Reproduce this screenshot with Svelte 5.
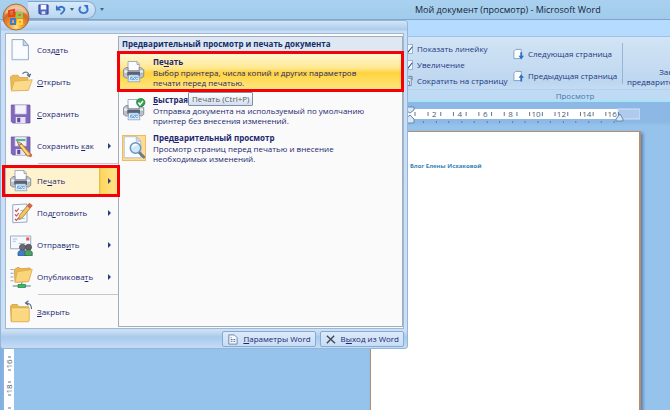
<script lang="ts">
	type Item = { icon: string; before: string; key: string; after: string; arrow?: boolean; line?: boolean };

	const items: Item[] = [
		{ icon: 'new', before: 'Созд', key: 'а', after: 'ть' },
		{ icon: 'open', before: '', key: 'О', after: 'ткрыть' },
		{ icon: 'save', before: '', key: 'С', after: 'охранить' },
		{ icon: 'saveas', before: 'Сохранить ', key: 'к', after: 'ак', arrow: true, line: true },
		{ icon: 'print', before: 'Пе', key: 'ч', after: 'ать', arrow: true },
		{ icon: 'prepare', before: 'Под', key: 'г', after: 'отовить', arrow: true },
		{ icon: 'send', before: 'Отправ', key: 'и', after: 'ть', arrow: true },
		{ icon: 'publish', before: 'Опубликова', key: 'т', after: 'ь', arrow: true, line: true },
		{ icon: 'close', before: '', key: 'З', after: 'акрыть' }
	];

	const actions = [
		{
			icon: 'print',
			before: 'Пе',
			key: 'ч',
			after: 'ать',
			lines: ['Выбор принтера, числа копий и других параметров', 'печати перед печатью.']
		},
		{
			icon: 'quick',
			before: '',
			key: 'Б',
			after: 'ыстрая',
			lines: ['Отправка документа на используемый по умолчанию', 'принтер без внесения изменений.']
		},
		{
			icon: 'preview',
			before: 'Пред',
			key: 'в',
			after: 'арительный просмотр',
			lines: ['Просмотр страниц перед печатью и внесение', 'необходимых изменений.']
		}
	];

	const marks = [2, 4, 6, 8, 10, 12, 14, 16];
	const step = 12.7;

	let active = $state('print');
	let showRuler = $state(true);
	let zoomOn = $state(true);
</script>

{#snippet folder()}
	<path d="M2 8l2-2h7l2 3h13v19H3z" fill="#e9b949" stroke="#c99a3c" />
	<path d="M3 11h24v16l-1 2H3z" fill="#fbd77f" stroke="#d5a447" />
	<path d="M4 12h22" stroke="#fff0bd" />
{/snippet}

{#snippet floppy()}
	<path d="M3 4h25v24H5l-2-2z" fill="#8069bd" stroke="#6650a3" />
	<path d="M8 4h15v12H8z" fill="#f4f2fb" stroke="#c3bae0" />
	<path d="M9 20h13v8H9z" fill="#e6e2f3" />
	<path d="M11 21h4v6h-4z" fill="#5d4a96" />
{/snippet}

{#snippet printer()}
	<path d="M8 2h12l3 3v9H8z" fill="#fafcff" stroke="#8796ad" />
	<path d="M20 2v4h3" fill="#d5deea" stroke="#8796ad" />
	<path d="M2 13l3-3h3v5h15v-5h2l4 3v9l-3 2H5l-3-2z" fill="#bcc0cb" stroke="#777e90" />
	<path d="M3 14h4v2h17v-2h4v3H3z" fill="#eceef3" />
	<path d="M7 16h17v5H7z" fill="#5b6172" />
	<path d="M26 18h1" stroke="#62d83e" stroke-width="2" />
	<path d="M9 20h13l2 9H8z" fill="#f7fbff" stroke="#7995bd" />
	<path d="M11 22h10l1 5H10z" fill="#73aee2" />
	<path d="M12 26l3-3 3 3 2-2 1 2" fill="none" stroke="#fff" />
{/snippet}

{#snippet pencil()}
	<path d="M13 15l4-2 12 14-4 3z" fill="#f6bf42" stroke="#95642c" />
	<path d="M15 14l11 14" stroke="#ffe895" stroke-width="1.5" />
	<path d="M13 15l-2-5 6 3z" fill="#f4d7a9" stroke="#76583e" />
	<path d="M26 30l4-4 1 3-2 2z" fill="#d46555" />
{/snippet}

{#snippet icon(name: string)}
	<svg class="icon" viewBox="0 0 32 32" aria-hidden="true">
		{#if name === 'new'}
			<path d="M4 2h15l7 8v19H4z" fill="#eef6fd" stroke="#7f99b8" />
			<path d="M6 4h11v8h7v15H6z" fill="#fff" opacity=".7" />
			<path d="M19 2v8h7z" fill="#c7d9ec" stroke="#7f99b8" />
		{:else if name === 'open'}
			<path d="M2 9l3-2h7l2 3h11v17H3z" fill="#edbb55" stroke="#d3a04a" />
			<path d="M7 15l24-2-5 14-23 1z" fill="#fcda8a" stroke="#dca850" />
			<path d="M18 5c4-4 8-2 9 2m-3-1l3 3 2-4" fill="none" stroke="#55718f" stroke-width="1.5" />
		{:else if name === 'save'}
			{@render floppy()}
		{:else if name === 'saveas'}
			{@render floppy()}
			<path d="M9 8h13" stroke="#58b684" stroke-width="3" />
			{@render pencil()}
		{:else if name === 'print'}
			{@render printer()}
		{:else if name === 'quick'}
			{@render printer()}
			<circle cx="25" cy="6" r="5.5" fill="#31a44b" stroke="#177531" />
			<path d="M22 6l2 3 4-5" fill="none" stroke="#fff" stroke-width="2" />
		{:else if name === 'preview'}
			<path d="M3 1h16l6 6v22H3z" fill="#fafdff" stroke="#a0b5cb" />
			<path d="M19 1v6h6z" fill="#d4e1ef" stroke="#a0b5cb" />
			<path d="M23 22l6 6" stroke="#697b90" stroke-width="4" stroke-linecap="round" />
			<circle cx="18" cy="16" r="7" fill="#cbe9fc" stroke="#7593b5" stroke-width="2" />
			<path d="M14 15c1-3 3-4 6-3" fill="none" stroke="#fff" stroke-width="2" />
		{:else if name === 'prepare'}
			<path d="M5 5l19-1v24l-19 1z" fill="#f7faff" stroke="#7890b1" />
			<path d="M8 12l2 2 3-4m-5 8l2 2 3-4m-5 8l2 2 3-4" fill="none" stroke="#d44849" stroke-width="1.5" />
			<path d="M15 13l6-1m-6 7l6-1m-6 6l6-1" stroke="#8ca4c4" />
			<path d="M27 3l4 3-13 16-5 3 1-6z" fill="#f4c75a" stroke="#9a713c" />
			<path d="M27 3l4 3-3 4-4-3z" fill="#d95f50" />
		{:else if name === 'send'}
			<path d="M2 4h27v17H2z" fill="#f5f9ff" stroke="#7895bb" />
			<path d="M5 8h6m-6 3h4m4 3h9" stroke="#91a9c8" />
			<path d="M23 6h4v4h-4z" fill="#e05743" />
			<circle cx="18" cy="19" r="4" fill="#6f6a70" stroke="#4b4a55" />
			<path d="M12 30v-4c1-4 11-4 12 0v4z" fill="#407cc7" stroke="#285492" />
			<circle cx="26" cy="19" r="4" fill="#64606a" stroke="#45444f" />
			<path d="M21 30v-4c1-4 9-4 10 0v4z" fill="#4aa35f" stroke="#2a6c40" />
		{:else if name === 'publish'}
			<path d="M2 6h4M2 11h4M2 16h4M2 21h4" stroke="#8fa5c4" stroke-width="1.5" />
			<path d="M7 6l5-3 4 2 12-1 2 3-4 15-18 1z" fill="#edb64c" stroke="#cf9c45" />
			<path d="M11 9l20-3-5 16-18 1z" fill="#fbd57a" stroke="#e0ab50" />
			<path d="M17 23v4M5 28h24" stroke="#8aa5ad" stroke-width="2" />
			<path d="M12 26h10v4H12z" fill="#35bb62" stroke="#278451" />
		{:else if name === 'close'}
			{@render folder()}
			<path d="M30 12c0-5-2-8-7-8m3-3l-4 3 4 3" fill="none" stroke="#536782" stroke-width="1.5" />
		{/if}
	</svg>
{/snippet}

{#snippet pageIcon(up: boolean)}
	<svg class="page-icon" viewBox="0 0 12 12" aria-hidden="true">
		<path d="M1 3l2-2h6v10H1z" fill="#fff" stroke="#7f9cc0" />
		<path d={up ? 'M9 4l3 4h-2v4H8V8H6z' : 'M8 4h2v4h2l-3 4-3-4h2z'} fill="#2d70c9" />
	</svg>
{/snippet}

<div class="window">
	<header class="titlebar">
		<nav class="quick">
			<button aria-label="Сохранить">
				<svg viewBox="0 0 12 12">
					<path d="M1 1h10v10H2l-1-1z" fill="#5267c4" stroke="#313f96" />
					<path d="M3 1h6v5H3z" fill="#f3f7ff" />
					<path d="M4 8h4v3H4z" fill="#dce3f5" />
				</svg>
			</button>
			<button aria-label="Отменить">
				<svg viewBox="0 0 12 12">
					<path d="M3 5c4-4 8-1 7 2-1 2-2 3-4 4" fill="none" stroke="#3972c8" stroke-width="2" />
					<path d="M1 1v6h6z" fill="#3972c8" />
				</svg>
			</button>
			<span class="caret"></span>
			<button aria-label="Повторить">
				<svg viewBox="0 0 12 12">
					<path d="M3 3C0 6 2 10 6 10s6-4 3-7" fill="none" stroke="#3972c8" stroke-width="2" />
					<path d="M6 1h5v5z" fill="#3972c8" />
				</svg>
			</button>
		</nav>
		<button class="more" aria-label="Настройка панели"><span></span></button>
		<h1>Мой документ (просмотр) - Microsoft Word</h1>
	</header>

	<div class="tabs"></div>

	<section class="ribbon">
		<div class="group">
			<div class="options">
				<label><input type="checkbox" bind:checked={showRuler} />Показать линейку</label>
				<label><input type="checkbox" bind:checked={zoomOn} />Увеличение</label>
				<button>
					<svg class="page-icon" viewBox="0 0 12 12" aria-hidden="true">
						<path d="M2 3h8v8H2z" fill="#f5f9ff" stroke="#6485ad" />
						<path d="M7 1h4v4M5 6h3v5" fill="none" stroke="#657b98" />
					</svg>
					Сократить на страницу
				</button>
			</div>
			<div class="paging">
				<button>{@render pageIcon(false)}Следующая страница</button>
				<button>{@render pageIcon(true)}Предыдущая страница</button>
			</div>
			<button class="leave">Закрыть окно<br />предварительного просмотра</button>
		</div>
		<div class="caption">Просмотр</div>
	</section>

	<main class="desk">
		<div class="ruler">
			<svg width="270" height="24" aria-hidden="true">
				<rect x="38" y="7" width="210" height="10" fill="#fff" />
				<rect x="248" y="7" width="22" height="10" fill="#aecbed" stroke="#d0e3f8" />
				{#each marks as n}
					<text x={39 + n * step} y="15">{n}</text>
					<path d="M{39 + (n - 0.5) * step} 10v4M{39 + (n + 0.5) * step} 10v4" stroke="#66758b" />
				{/each}
				<path d="M45 10v4" stroke="#66758b" />
				{#each marks as n}
					<path d="M{28 + n * step} 19v2M{41 + n * step} 19v2" stroke="#587fae" />
				{/each}
				<path d="M35 5h9v3l-4 3-5-3zm0 12l5-4 4 4v4h-9z" fill="#d8e7f6" stroke="#6587af" />
				<path d="M246 17l4-5 3 5v2h-7z" fill="#d8e7f6" stroke="#6587af" />
			</svg>
		</div>
		<div class="workspace">
			<div class="side">
				<svg width="10" height="61" aria-hidden="true">
					<g transform="rotate(-90)">
						<text x="-15" y="8">16</text>
						<text x="-40" y="8">18</text>
					</g>
					<path d="M4 8h3M4 21h3M4 33h3M4 46h3M4 59h3" stroke="#66758b" />
				</svg>
			</div>
			<article class="paper"><p>Блог Елены Исхаковой</p></article>
		</div>
	</main>

	<div class="menu">
		<div class="body">
			<ul class="left">
				{#each items as item}
					<li class:line={item.line}>
						<button class="entry" class:active={active === item.icon} onclick={() => (active = item.icon)}>
							{@render icon(item.icon)}
							<span class="label">{item.before}<u>{item.key}</u>{item.after}</span>
							{#if item.arrow}<span class="arrow"></span>{/if}
						</button>
					</li>
				{/each}
			</ul>
			<section class="right">
				<h2>Предварительный просмотр и печать документа</h2>
				{#each actions as a, i}
					<button class="action" class:hot={i === 0}>
						<span class="pic" class:framed={i === 2}>{@render icon(a.icon)}</span>
						<span class="text">
							<strong>{a.before}<u>{a.key}</u>{a.after}</strong>
							{#each a.lines as line}
								<span>{line}</span>
							{/each}
						</span>
						{#if i === 0}<span class="tooltip" role="tooltip">Печать (Ctrl+P)</span>{/if}
					</button>
				{/each}
			</section>
		</div>
		<footer>
			<button>
				<svg viewBox="0 0 12 12" aria-hidden="true">
					<path d="M2 1h6l3 3v7H2z" fill="#f7faff" stroke="#69809f" />
					<path d="M4 4h1m-1 2h2m-2 2h2m1-2h2m-2 2h2" stroke="#496c9b" />
				</svg>
				<span><u>П</u>араметры Word</span>
			</button>
			<button>
				<svg viewBox="0 0 12 12" aria-hidden="true">
					<path d="M2 2l9 8M10 2L2 10" stroke="#3d4657" stroke-width="1.5" />
				</svg>
				<span>В<u>ы</u>ход из Word</span>
			</button>
		</footer>
	</div>

	<button class="orb" aria-label="Office">
		<svg viewBox="0 0 28 28" aria-hidden="true">
			<defs>
				<radialGradient id="orb" cx="50%" cy="88%" r="85%">
					<stop offset="0" stop-color="#ffe680" />
					<stop offset=".3" stop-color="#f79a2c" />
					<stop offset=".65" stop-color="#cf6a28" />
					<stop offset="1" stop-color="#efc79c" />
				</radialGradient>
			</defs>
			<circle cx="14" cy="14" r="13" fill="url(#orb)" stroke="#a56b42" />
			<path d="M3 11C5 1 23 1 25 11c-6-3-15-3-22 0z" fill="#fff" opacity=".4" />
			<g fill="none" stroke-width="2">
				<path d="M7 8l5-1v6H7z" stroke="#e6451c" />
				<path d="M15 10h5v4h-5z" stroke="#8fc957" />
				<path d="M9 16h4v5H9z" stroke="#3a7dd0" />
				<path d="M16 17h4v4h-4z" stroke="#ffd84a" />
			</g>
		</svg>
	</button>
</div>

<style>
	:global(body) {
		margin: 0;
	}
	.window {
		position: relative;
		display: flex;
		flex-direction: column;
		min-height: 100vh;
		overflow: hidden;
		background: #95c3ec;
		font: 8px/12px 'Open Sans', 'Noto Sans', sans-serif;
		color: #1d397f;
	}
	button {
		display: flex;
		align-items: center;
		margin: 0;
		padding: 0;
		border: 0;
		background: none;
		font: inherit;
		color: inherit;
		text-align: left;
		white-space: nowrap;
	}
	u {
		text-underline-offset: 1px;
	}
	svg {
		display: block;
		flex: none;
	}
	.titlebar {
		display: flex;
		align-items: center;
		height: 20px;
		background: linear-gradient(#a9d1ef, #a1cbeb);
		border-bottom: 1px solid #80a5c8;
		box-sizing: border-box;
	}
	.quick {
		display: flex;
		align-items: center;
		gap: 6px;
		height: 18px;
		margin-left: 28px;
		padding: 0 6px 0 10px;
		border: 1px solid #86a6c6;
		border-left: 0;
		border-radius: 0 9px 9px 0;
		background: linear-gradient(#d7eafb, #b9d6f0);
		box-sizing: border-box;
	}
	.quick svg {
		width: 11px;
		height: 11px;
	}
	.caret,
	.more span {
		border: 2px solid transparent;
		border-top: 3px solid #416291;
		border-bottom: 0;
	}
	.caret {
		margin: 0 -2px;
	}
	.more {
		width: 12px;
		justify-content: center;
	}
	h1 {
		flex: 1;
		margin: 0;
		padding-left: 307px;
		font-size: 9px;
		font-weight: 400;
		color: #17243a;
		white-space: nowrap;
	}
	.tabs {
		height: 16px;
		background: #b5dbff;
	}
	.ribbon {
		height: 66px;
		border-top: 1px solid #9fc1e4;
		border-bottom: 2px solid #a6e4f3;
		background: linear-gradient(#d2e4f5, #bed7f0 70%, #c9e0f6);
		box-sizing: border-box;
		overflow: hidden;
	}
	.group {
		display: flex;
		height: 52px;
		padding-left: 402px;
	}
	.options {
		display: flex;
		flex-direction: column;
		gap: 4px;
		width: 111px;
		padding-top: 6px;
		box-sizing: border-box;
		flex: none;
		white-space: nowrap;
	}
	.options label,
	.options button {
		display: flex;
		align-items: center;
		gap: 4px;
		height: 12px;
	}
	.options input {
		appearance: none;
		width: 11px;
		height: 10px;
		margin: 0;
		border: 1px solid #9bb7d6;
		background: #f5f9ff;
		flex: none;
	}
	.options input:checked::after {
		content: '';
		display: block;
		width: 3px;
		height: 6px;
		margin-left: 4px;
		border: solid #2a4a86;
		border-width: 0 1px 1px 0;
		transform: rotate(40deg);
	}
	.page-icon {
		width: 11px;
		height: 12px;
	}
	.paging {
		display: flex;
		flex-direction: column;
		gap: 10px;
		width: 110px;
		margin: 6px 0 5px;
		padding-top: 5px;
		border-right: 1px solid #98b5d6;
		box-sizing: border-box;
		flex: none;
	}
	.paging button {
		gap: 4px;
		height: 12px;
	}
	.leave {
		display: block;
		padding: 28px 0 0 4px;
		line-height: 10px;
		text-align: center;
	}
	.caption {
		padding-left: 480px;
		border-top: 1px solid #b4d0ec;
		background: #bfdaf4;
		text-align: center;
		color: #4678ad;
	}
	.desk {
		display: flex;
		flex-direction: column;
		flex: 1;
	}
	.ruler {
		height: 29px;
		padding-left: 370px;
		background: linear-gradient(#8db8e6 20px, #95c3ec 24px);
		box-sizing: border-box;
	}
	.desk text {
		font-size: 8px;
		text-anchor: middle;
		fill: #4d5c74;
	}
	.workspace {
		display: flex;
		justify-content: space-between;
		flex: 1;
	}
	.side {
		width: 14px;
		padding: 218px 0 0 4px;
		background: linear-gradient(90deg, #83afe0, #95c3ec);
		box-sizing: border-box;
	}
	.side svg {
		background: #fff;
	}
	.paper {
		flex: 1;
		margin: 0 29px 0 356px;
		border: 1px solid #b78d6c;
		border-bottom: 0;
		border-right-width: 2px;
		background: #fff;
		box-shadow: 2px 2px 3px #527fae;
	}
	.paper p {
		margin: 0;
		padding: 28px 0 0 39px;
		font-size: 6px;
		font-weight: 700;
		color: #3584b5;
	}
	.menu {
		position: absolute;
		top: 20px;
		left: 0;
		width: 408px;
		padding: 12px 3px 0 4px;
		border: 1px solid #93b6d9;
		border-radius: 3px;
		background: linear-gradient(#d4e5f7, #a9ccec 9px, #c9def4 10px, #cbdff5 310px, #a8caec 316px, #c5dcf5);
		box-sizing: border-box;
		color: #1c2770;
	}
	.body {
		display: flex;
		height: 296px;
		border: 1px solid #a0b8d2;
		background: #fafafa;
		box-sizing: border-box;
	}
	.left {
		flex: none;
		width: 112px;
		margin: 0;
		padding: 0;
		list-style: none;
	}
	.line::after {
		content: '';
		display: block;
		height: 1px;
		margin: 1px 0 1px 32px;
		background: #c5c9cf;
	}
	.entry {
		position: relative;
		width: 100%;
		height: 32px;
		padding-left: 3px;
	}
	.icon {
		width: 24px;
		height: 24px;
	}
	.label {
		flex: 1;
		padding-left: 4px;
	}
	.arrow {
		width: 4px;
		margin-right: 6px;
		border: 3px solid transparent;
		border-left: 3px solid #263d83;
		border-right: 0;
		box-sizing: border-box;
	}
	.entry.active {
		background: linear-gradient(90deg, #fff3cd 93px, #dfb640 93px, #ffd75f 95px, #ffe58a);
	}
	.entry.active::after {
		content: '';
		position: absolute;
		inset: 0 -2px 0 -4px;
		border: 3px solid #f40009;
	}
	.right {
		flex: 1;
		min-width: 0;
		margin: 2px 0 1px;
		border: 1px solid #a0adbd;
		background: #fafafa;
	}
	h2 {
		height: 16px;
		margin: 0;
		padding-left: 3px;
		border-bottom: 1px solid #c3d1e0;
		background: #dde8f2;
		font-size: 8px;
		line-height: 14px;
		color: #162c68;
		white-space: nowrap;
		box-sizing: border-box;
	}
	.action {
		position: relative;
		width: 100%;
		height: 38px;
		padding-left: 3px;
		gap: 7px;
	}
	.action.hot {
		background: linear-gradient(#fff8d5, #ffe790 40%, #ffd33c 52%, #ffe889);
	}
	.action.hot::after {
		content: '';
		position: absolute;
		inset: -2px -2px -1px;
		border: 3px solid #f40009;
	}
	.pic {
		display: flex;
		align-items: center;
		justify-content: center;
		width: 24px;
		height: 26px;
		border: 1px solid transparent;
		box-sizing: border-box;
	}
	.pic.framed {
		border-color: #edba62;
		background: #ffdc96;
	}
	.text {
		display: flex;
		flex-direction: column;
		line-height: 10px;
	}
	.text strong {
		line-height: 12px;
	}
	.tooltip {
		position: absolute;
		z-index: 1;
		top: 39px;
		left: 69px;
		padding: 0 3px;
		border: 1px solid #7f8fa5;
		border-radius: 1px;
		background: linear-gradient(#fff, #d3deed);
		color: #535b67;
	}
	footer {
		display: flex;
		justify-content: flex-end;
		gap: 4px;
		padding: 2px 0 1px;
	}
	footer button {
		height: 16px;
		padding: 0 4px;
		gap: 5px;
		border: 1px solid #85aad3;
		border-radius: 2px;
		background: linear-gradient(#dceafa, #c7ddf5);
		box-sizing: border-box;
	}
	footer svg {
		width: 11px;
		height: 11px;
	}
	.orb {
		position: absolute;
		top: 3px;
		left: 2px;
	}
	.orb svg {
		width: 28px;
		height: 28px;
	}
</style>
